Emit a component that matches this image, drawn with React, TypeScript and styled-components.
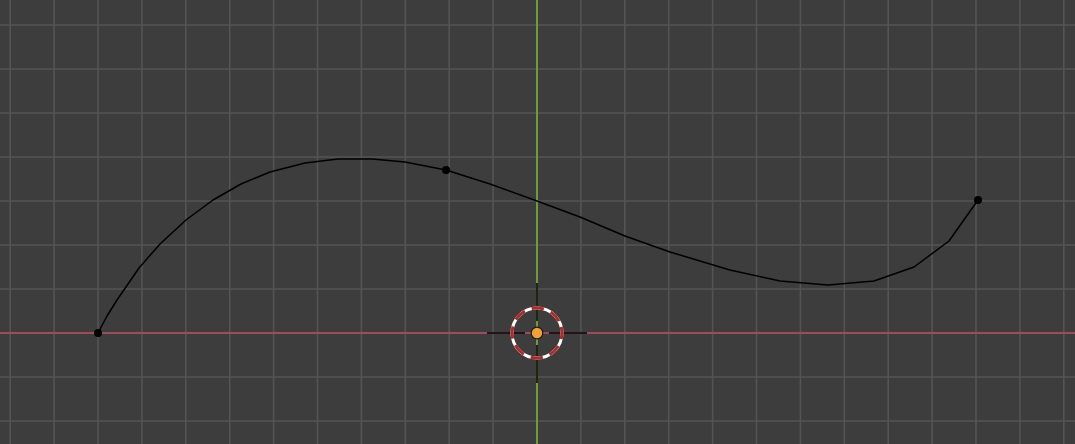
import React from "react";
import styled, { createGlobalStyle } from "styled-components";

const GlobalStyle = createGlobalStyle`
  html, body {
    margin: 0;
    padding: 0;
    background: #3d3d3d;
    overflow: hidden;
    font-family: "Liberation Sans", Arial, sans-serif;
  }
`;

const Viewport = styled.main`
  width: 1075px;
  height: 444px;
  background: #3d3d3d;
  display: flex;
  overflow: hidden;
`;

const Canvas = styled.svg`
  display: block;
  flex: 1;
  width: 1075px;
  height: 444px;
`;

const W = 1075;
const H = 444;
const OX = 537;
const OY = 333;
const STEP_X = 43.9;
const STEP_Y = 44;

const curvePts: [number, number][] = [
  [98, 333], [107, 316], [117, 300], [128, 284], [139, 268], [160, 244], [186, 220],
  [213, 200], [241, 184], [270, 172], [305, 163], [338, 159], [372, 159],
  [405, 162], [446, 170], [490, 184], [537, 201], [580, 217], [625, 236],
  [670, 252], [730, 270], [780, 281], [828, 285], [874, 281], [914, 267],
  [949, 241], [978, 200],
];

const controlPts: [number, number][] = [
  [98, 333],
  [446, 170],
  [978, 200],
];

function Grid() {
  const xs: number[] = [];
  for (let k = -13; k <= 13; k++) {
    const x = OX + k * STEP_X;
    if (x > -2 && x < W + 2 && k !== 0) xs.push(x);
  }
  const ys: number[] = [];
  for (let k = -8; k <= 3; k++) {
    const y = OY + k * STEP_Y;
    if (y > -2 && y < H + 2 && k !== 0) ys.push(y);
  }
  return (
    <g stroke="#545454" strokeWidth={1.6}>
      {xs.map((x) => (
        <line key={"x" + x} x1={x} y1={0} x2={x} y2={H} />
      ))}
      {ys.map((y) => (
        <line key={"y" + y} x1={0} y1={y} x2={W} y2={y} />
      ))}
    </g>
  );
}

function Cursor() {
  const r = 25;
  const circ = 2 * Math.PI * r;
  const seg = circ / 16;
  return (
    <g>
      <line x1={OX - 50} y1={OY} x2={OX - 12} y2={OY} stroke="#000" strokeWidth={1.5} />
      <line x1={OX + 12} y1={OY} x2={OX + 50} y2={OY} stroke="#000" strokeWidth={1.5} />
      <line x1={OX} y1={OY - 50} x2={OX} y2={OY - 12} stroke="#000" strokeWidth={1.5} />
      <line x1={OX} y1={OY + 12} x2={OX} y2={OY + 50} stroke="#000" strokeWidth={1.5} />
      <circle cx={OX} cy={OY} r={r} fill="none" stroke="#ffffff" strokeWidth={3} />
      <circle
        cx={OX}
        cy={OY}
        r={r}
        fill="none"
        stroke="#b52828"
        strokeWidth={3}
        strokeDasharray={`${seg * 1.25} ${seg * 0.75}`}
        transform={`rotate(-14 ${OX} ${OY})`}
      />
      <circle cx={OX} cy={OY} r={5.8} fill="#f4a133" stroke="#1a1a1a" strokeWidth={1.2} />
    </g>
  );
}

export default function App() {
  const d = curvePts.map((p, i) => (i === 0 ? "M" : "L") + p[0] + " " + p[1]).join(" ");
  return (
    <Viewport>
      <GlobalStyle />
      <Canvas viewBox={`0 0 ${W} ${H}`} xmlns="http://www.w3.org/2000/svg">
        <rect x={0} y={0} width={W} height={H} fill="#3d3d3d" />
        <Grid />
        <line x1={0} y1={OY} x2={W} y2={OY} stroke="#9c4c5c" strokeWidth={2} />
        <line x1={OX} y1={0} x2={OX} y2={H} stroke="#6f9c36" strokeWidth={2} />
        <path d={d} fill="none" stroke="#000" strokeWidth={1.5} strokeLinejoin="round" />
        {controlPts.map((p) => (
          <circle key={p.join(",")} cx={p[0]} cy={p[1]} r={4} fill="#000" />
        ))}
        <Cursor />
      </Canvas>
    </Viewport>
  );
}
